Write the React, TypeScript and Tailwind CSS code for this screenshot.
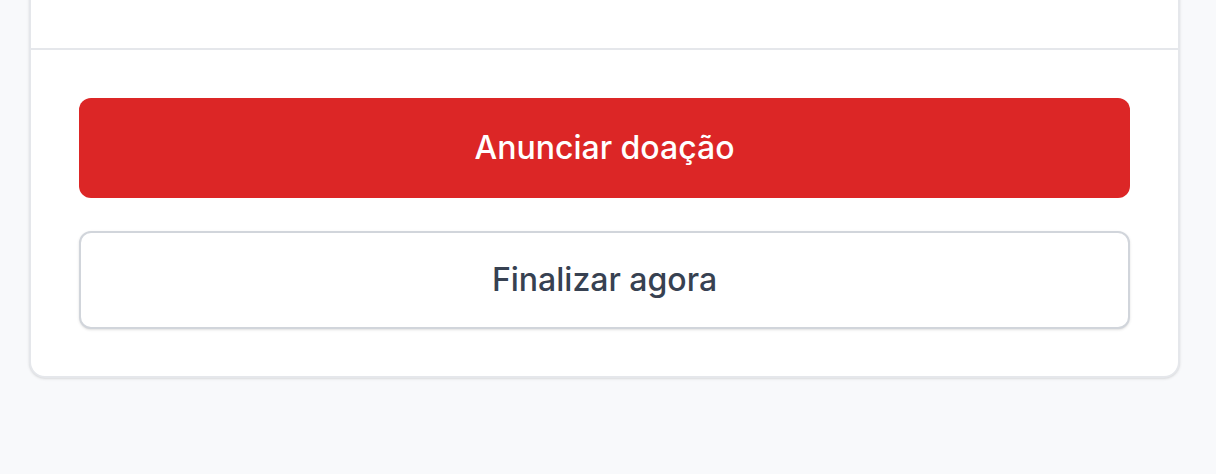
export default function App() {
  return (
    <main className="min-h-[474px] overflow-hidden bg-[#f8f9fb] font-['Inter',sans-serif]">
      <div className="-mt-[50px] ml-[29px] w-[1151px] rounded-2xl border-2 border-gray-200 bg-white shadow-sm">
        <div className="h-[98px] border-b-2 border-gray-200" />
        <div className="flex flex-col gap-[33px] px-12 pt-12 pb-[47px]">
          <button className="flex h-[100px] items-center justify-center rounded-xl bg-[#dc2626] text-[32px] font-[550] text-white">
            Anunciar doação
          </button>
          <button className="flex h-[98px] items-center justify-center rounded-xl border-2 border-[#d1d5db] bg-white text-[32px] font-medium text-[#374151] shadow-sm">
            Finalizar agora
          </button>
        </div>
      </div>
    </main>
  );
}
